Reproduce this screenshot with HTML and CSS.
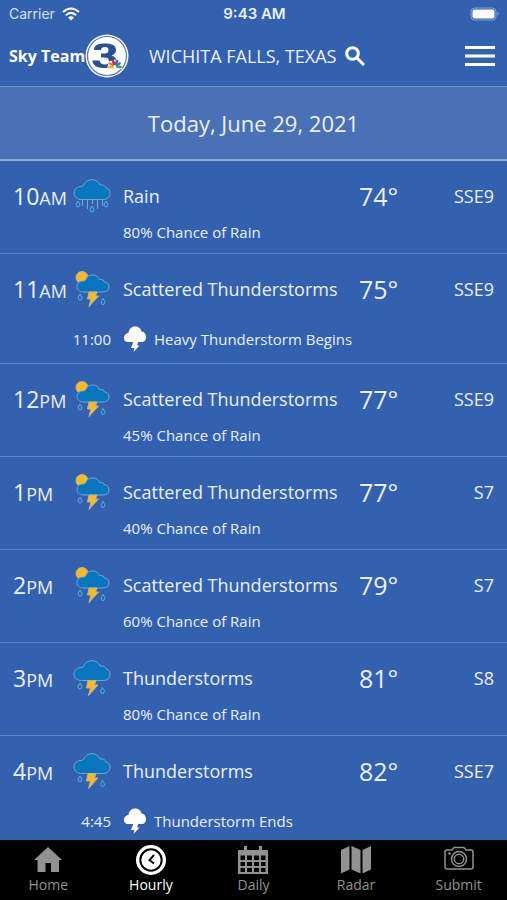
FILE: index.html
```html
<!DOCTYPE html>
<html lang="en">
<head>
<meta charset="utf-8">
<meta name="viewport" content="width=device-width, initial-scale=1">
<title>Sky Team 3 Hourly Forecast</title>
<link rel="stylesheet" href="styles.css">
</head>
<body>
<svg class="defs" aria-hidden="true">
  <symbol id="rain" viewBox="0 0 38 36">
    <path class="cloud" d="M8.500 21.500C4.500 21.500 1 19 1 15C1 11 4.500 8.500 8 8.500C9.500 8 10 8 10.500 7.500C11.500 4 15 1.700 19 1.700C23 1.700 26 4 27 7C31 6.500 32.500 8 33 10C35.500 10.500 37 12.500 37 15C37 19 34 21.500 30.500 21.500Z"/>
    <path class="streak" d="M9.500 22v6M14.500 22v9M19.500 22v4M24.500 22v9M29.500 22v6"/>
    <path class="drop" d="M5 23c2 3 2.200 4 1.500 5.200a2 2 0 0 1-3 0C2.800 27 3 26 5 23ZM19 28c2 3 2.200 4 1.500 5.200a2 2 0 0 1-3 0C16.800 32 17 31 19 28ZM33 23c2 3 2.200 4 1.500 5.200a2 2 0 0 1-3 0C30.800 27 31 26 33 23Z"/>
  </symbol>
  <symbol id="storm" viewBox="0 0 38 36">
    <path class="cloud" d="M8.500 20.500C4.500 20.500 1 18 1 14C1 10 4.500 7.500 8 7.500C9.500 7 10 7 10.500 6.500C11.500 3 15 .7 19 .7C23 .7 26 3 27 6C31 5.500 32.500 7 33 9C35.500 9.500 37 11.500 37 14C37 18 34 20.500 30.500 20.500Z"/>
    <path class="bolt" d="M15 20.500H23L21.500 25H25L15.500 35.500L17.500 28H13.500Z"/>
    <path class="drop" d="M7 23c2 3 2.200 4 1.500 5.200a2 2 0 0 1-3 0C4.800 27 5 26 7 23ZM29.500 27.500c2 3 2.200 4 1.500 5.200a2 2 0 0 1-3 0C27.300 31.500 27.500 30.500 29.500 27.500Z"/>
  </symbol>
  <symbol id="scattered" viewBox="0 0 38 36">
    <circle class="sun" cx="9" cy="6.500" r="6"/>
    <path class="cloud" d="M10 21C6.500 21 4 18.500 4 15.500C4 12 6.500 10 9.500 10C10.500 10 11.500 10 12.500 9C13.500 5.500 16.500 4 20 4C23.500 4 25.500 6 26.500 8.500C29.500 8 31 9.500 31.500 11C34 11 36 13 36 16C36 19 33.500 21 30 21Z"/>
    <path class="bolt" d="M16 21H24L22.500 25H25.500L16 35.500L18 28H14.500Z"/>
    <path class="drop" d="M7 23c2 3 2.200 4 1.500 5.200a2 2 0 0 1-3 0C4.800 27 5 26 7 23ZM30 27.500c2 3 2.200 4 1.500 5.200a2 2 0 0 1-3 0C27.800 31.500 28 30.500 30 27.500Z"/>
  </symbol>
  <symbol id="alert" viewBox="0 0 24 26">
    <path d="M5 16C2 16 1 14 1 12C1 9.500 3 7 5.500 7C6 3 8.500 .5 12 .5C15.500 .5 18 2.500 18.500 5.500C21.500 5.500 23 8.500 23 11.500C23 14.500 21 16 18.500 16Z"/>
    <path d="M10.500 15.500H15.500L14 19.500H16.500L10.500 26L11.500 22H8Z"/>
  </symbol>
</svg>

<div class="status">
  <span class="carrier">Carrier
    <svg class="wifi" viewBox="0 0 18 14" aria-hidden="true"><path d="M1 5Q9-2 17 5" /><path d="M3.800 8.200Q9 3.500 14.200 8.200"/><path class="dot" d="M6 10.500Q9 8 12 10.500L9 13.500Z"/></svg>
  </span>
  <span class="clock">9:43 AM</span>
  <svg class="battery" viewBox="0 0 30 14" aria-hidden="true"><rect class="shell" x="1" y="1" width="25" height="12" rx="3.500"/><rect class="charge" x="2.500" y="2.500" width="22" height="9" rx="2"/><path class="cap" d="M27.500 5Q30 7 27.500 9Z"/></svg>
</div>

<header class="header">
  <a class="brand" href="#" aria-label="Sky Team 3">
    <span class="brand-name">Sky Team</span>
    <svg class="brand-mark" viewBox="0 0 44 44" aria-hidden="true">
      <circle cx="22" cy="22" r="21.500" fill="#fff"/>
      <circle cx="22" cy="22" r="19.500" fill="none" stroke="#5579b8" stroke-width="1.200"/>
      <path d="M9 16C9 11 13 9.500 20 9.500C28 9.500 31 12 31 16C31 19 29 20.500 26.500 21.500C30 22.500 31.500 24.500 31.500 27C31.500 32 27 34 20 34C12 34 7.500 31.500 7.500 26.500H14.500C15 29 17 30.500 20 30.500C23 30.500 24 29 24 27C24 24.500 22.500 23.500 19 23.500H16V19.500H19C22.500 19.500 23.500 18.500 23.500 16.300C23.500 14 22.500 13 20 13C17.500 13 16 14 16 16Z" fill="#294f94"/>
      <path d="M22 34.500L24 27.500L30 25.500L36.500 28.500L37 35Z" fill="#fff"/>
      <g stroke-width="2.600" stroke-linecap="round">
        <path d="M27.500 33L24 33" stroke="#f3b229"/><path d="M27.500 31L25 29.500" stroke="#ef7b25"/><path d="M29 30L28 27" stroke="#d72c3c"/><path d="M31 30L32 27" stroke="#7350a3"/><path d="M32 31.500L34.500 29.500" stroke="#2788d0"/><path d="M32.500 33L35.500 33" stroke="#35a653"/>
      </g>
    </svg>
  </a>
  <button class="place" type="button">Wichita Falls, Texas
    <svg class="search" viewBox="0 0 20 20" aria-hidden="true"><circle cx="7.500" cy="7.500" r="5.800"/><path d="M11.800 11.800L19 19"/></svg>
  </button>
  <button class="menu" type="button" aria-label="Menu"><svg viewBox="0 0 30 22" aria-hidden="true"><path d="M0 2.500H30M0 11H30M0 19.500H30"/></svg></button>
</header>

<h1 class="date">Today, June 29, 2021</h1>

<main class="hours">
  <article class="hour">
    <h2 class="time">10<small>AM</small></h2><svg class="icon" aria-hidden="true"><use href="#rain"/></svg><span class="sky">Rain</span><span class="temp">74°</span><span class="wind">SSE9</span>
    <p class="chance">80% Chance of Rain</p>
  </article>
  <article class="hour">
    <h2 class="time">11<small>AM</small></h2><svg class="icon" aria-hidden="true"><use href="#scattered"/></svg><span class="sky">Scattered Thunderstorms</span><span class="temp">75°</span><span class="wind">SSE9</span>
    <time class="event-time">11:00</time><p class="event"><svg aria-hidden="true"><use href="#alert"/></svg>Heavy Thunderstorm Begins</p>
  </article>
  <article class="hour">
    <h2 class="time">12<small>PM</small></h2><svg class="icon" aria-hidden="true"><use href="#scattered"/></svg><span class="sky">Scattered Thunderstorms</span><span class="temp">77°</span><span class="wind">SSE9</span>
    <p class="chance">45% Chance of Rain</p>
  </article>
  <article class="hour">
    <h2 class="time">1<small>PM</small></h2><svg class="icon" aria-hidden="true"><use href="#scattered"/></svg><span class="sky">Scattered Thunderstorms</span><span class="temp">77°</span><span class="wind">S7</span>
    <p class="chance">40% Chance of Rain</p>
  </article>
  <article class="hour">
    <h2 class="time">2<small>PM</small></h2><svg class="icon" aria-hidden="true"><use href="#scattered"/></svg><span class="sky">Scattered Thunderstorms</span><span class="temp">79°</span><span class="wind">S7</span>
    <p class="chance">60% Chance of Rain</p>
  </article>
  <article class="hour">
    <h2 class="time">3<small>PM</small></h2><svg class="icon" aria-hidden="true"><use href="#storm"/></svg><span class="sky">Thunderstorms</span><span class="temp">81°</span><span class="wind">S8</span>
    <p class="chance">80% Chance of Rain</p>
  </article>
  <article class="hour">
    <h2 class="time">4<small>PM</small></h2><svg class="icon" aria-hidden="true"><use href="#storm"/></svg><span class="sky">Thunderstorms</span><span class="temp">82°</span><span class="wind">SSE7</span>
    <time class="event-time">4:45</time><p class="event"><svg aria-hidden="true"><use href="#alert"/></svg>Thunderstorm Ends</p>
  </article>
</main>

<nav class="tabs">
  <a class="tab" href="#"><svg viewBox="0 0 30 30" aria-hidden="true"><path fill="currentColor" d="M15 2L29 15H26V27H18V18H12.500V27H4.500V15H1Z"/></svg>Home</a>
  <a class="tab active" href="#" aria-current="page"><svg viewBox="0 0 30 30" aria-hidden="true"><circle cx="15" cy="15" r="15" fill="currentColor"/><circle cx="15" cy="15" r="10.700" fill="none" stroke="#000" stroke-width="2"/><path d="M18 9.800L13.500 15L18 18.500" fill="none" stroke="#000" stroke-width="2"/></svg>Hourly</a>
  <a class="tab" href="#"><svg viewBox="0 0 30 30" aria-hidden="true"><path fill="currentColor" fill-rule="evenodd" d="M6 1H9V5H21V1H24V5H30V29H0V5H6ZM2.500 10.500V15H7V10.500ZM9 10.500V15H14V10.500ZM16 10.500V15H21V10.500ZM23 10.500V15H27.500V10.500ZM2.500 17V21H7V17ZM9 17V21H14V17ZM16 17V21H21V17ZM23 17V21H27.500V17ZM2.500 23V27H7V23ZM9 23V27H14V23ZM16 23V27H21V23ZM23 23V27H27.500V23Z"/></svg>Daily</a>
  <a class="tab" href="#"><svg viewBox="0 0 30 30" aria-hidden="true"><path fill="currentColor" d="M0 5L8.500 1V24.500L0 28.500ZM10.500 1L19.500 5V28.500L10.500 24.500ZM21.500 5L30 1V24.500L21.500 28.500Z"/></svg>Radar</a>
  <a class="tab" href="#"><svg viewBox="0 0 30 30" aria-hidden="true"><g fill="none" stroke="currentColor" stroke-width="1.500"><path d="M3 5H8L10 2.500H20L22 5H27Q29 5 29 7V22Q29 24 27 24H3Q1 24 1 22V7Q1 5 3 5Z"/><circle cx="15" cy="14" r="7.500"/><circle cx="15" cy="14" r="4.700"/></g><circle cx="5.500" cy="8.500" r="1.300" fill="currentColor"/></svg>Submit</a>
</nav>
</body>
</html>
```
FILE: styles.css
```css
* { box-sizing: border-box; }

body {
  margin: 0;
  height: 100vh;
  display: flex;
  flex-direction: column;
  background: #3360af;
  color: #eaf1ff;
  font-family: "Open Sans", "Noto Sans", sans-serif;
}

h1, h2, p { margin: 0; font-weight: 400; }
button { padding: 0; border: 0; background: none; color: inherit; font: inherit; cursor: pointer; }
a { color: inherit; text-decoration: none; }
.defs { display: none; }

.status {
  flex: none;
  display: grid;
  grid-template-columns: 1fr auto 1fr;
  align-items: center;
  height: 28px;
  padding: 0 7px 0 9px;
  font: 15px/28px Inter, sans-serif;
}
.carrier { display: flex; align-items: center; gap: 7px; color: #d5e2f8; font-size: 14px; }
.wifi { width: 18px; height: 14px; fill: none; stroke: #fff; stroke-width: 2; }
.wifi .dot { fill: #fff; stroke: none; }
.clock { font-weight: 600; }
.battery { width: 30px; height: 14px; justify-self: end; }
.shell { fill: none; stroke: #88a5d5; }
.charge { fill: #fff; }
.cap { fill: #88a5d5; }

.header {
  flex: none;
  display: flex;
  align-items: center;
  height: 58px;
  padding: 0 12px 2px 9px;
}
.brand { display: flex; align-items: center; width: 140px; color: #fff; }
.brand-name { font-size: 16px; font-weight: 700; white-space: nowrap; }
.brand-mark { width: 44px; height: 44px; flex: none; }
.place { display: flex; align-items: center; gap: 8px; font-size: 18px; text-transform: uppercase; white-space: nowrap; }
.search { width: 20px; height: 20px; fill: none; stroke: #fff; stroke-width: 3; }
.menu { margin-left: auto; }
.menu svg { display: block; width: 30px; height: 22px; stroke: #fff; stroke-width: 3; }

.date {
  flex: none;
  height: 75px;
  border-top: 1px solid #7493cb;
  border-bottom: 2px solid #8facd9;
  background: #4a71b5;
  font-size: 22px;
  line-height: 73px;
  text-align: center;
}

.hours { flex: 1; min-height: 0; overflow-y: auto; scrollbar-width: none; }
.hour {
  display: grid;
  grid-template-columns: 60px 38px 1fr 60px 75px;
  grid-template-rows: 36px auto;
  padding: 17px 13px 11px;
  border-bottom: 1px solid #6485c3;
  line-height: 36px;
  white-space: nowrap;
}
.time { font-size: 23px; }
.time small { font-size: 18px; }
.icon { width: 38px; height: 36px; }
.sky { padding-left: 12px; font-size: 18px; }
.temp { font-size: 25px; }
.wind { font-size: 18px; text-align: right; }
.chance, .event, .event-time { font-size: 15px; }
.chance { grid-column: 3 / -1; margin-top: 8px; padding-left: 12px; line-height: 20px; }
.event-time, .event { margin-top: 19px; line-height: 26px; }
.event-time { grid-column: 1 / 3; text-align: right; }
.event { grid-column: 3 / -1; display: flex; gap: 7px; padding-left: 12px; }
.event svg { width: 24px; height: 26px; fill: #fff; }

.cloud { fill: #0876bd; stroke: #75a5d8; }
.streak { fill: none; stroke: #7fa1d3; }
.drop { fill: #0876bd; stroke: #75a9d7; }
.bolt, .sun { fill: #fdb91f; stroke: #b7b690; stroke-width: 1; }

.tabs {
  flex: none;
  display: grid;
  grid-template-columns: repeat(5, 1fr);
  column-gap: 6px;
  height: 60px;
  padding: 5px 0;
  background: #000;
}
.tab { display: flex; flex-direction: column; align-items: center; color: #929292; font-size: 14px; line-height: 20px; }
.tab svg { width: 30px; height: 30px; }
.active { color: #fff; }
```
